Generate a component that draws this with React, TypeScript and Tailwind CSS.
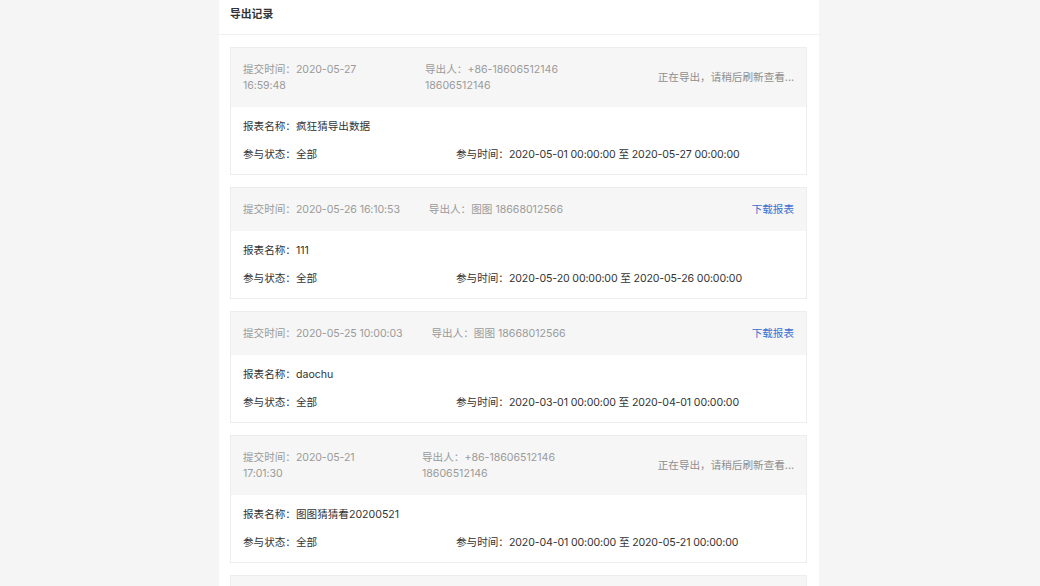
import React from "react";

type Rec = {
  time: string;
  exporter: string;
  col1: string;
  col2: string;
  status: "pending" | "done";
  name: string;
  range: string;
};

const records: Rec[] = [
  {
    time: "2020-05-27 16:59:48",
    exporter: "+86-18606512146 18606512146",
    col1: "w-[125px]",
    col2: "ml-[57px] w-[150px]",
    status: "pending",
    name: "疯狂猜导出数据",
    range: "2020-05-01 00:00:00 至 2020-05-27 00:00:00",
  },
  {
    time: "2020-05-26 16:10:53",
    exporter: "图图 18668012566",
    col1: "",
    col2: "ml-[29px]",
    status: "done",
    name: "111",
    range: "2020-05-20 00:00:00 至 2020-05-26 00:00:00",
  },
  {
    time: "2020-05-25 10:00:03",
    exporter: "图图 18668012566",
    col1: "",
    col2: "ml-[29px]",
    status: "done",
    name: "daochu",
    range: "2020-03-01 00:00:00 至 2020-04-01 00:00:00",
  },
  {
    time: "2020-05-21 17:01:30",
    exporter: "+86-18606512146 18606512146",
    col1: "w-[125px]",
    col2: "ml-[54px] w-[150px]",
    status: "pending",
    name: "图图猜猜看20200521",
    range: "2020-04-01 00:00:00 至 2020-05-21 00:00:00",
  },
];

function Card({ r }: { r: Rec }) {
  return (
    <div className="border border-[#ededed] bg-white">
      <div className="flex items-center bg-[#f6f6f6] pl-[12px] pr-[12px] pt-[14px] pb-[13px] text-[#9a9a9a] leading-[16px]">
        <div className={`${r.col1} shrink-0`}>
          提交时间：<span className="tracking-[-0.1px]">{r.time}</span>
        </div>
        <div className={`${r.col2} shrink-0`}>导出人：{r.exporter}</div>
        <div className="ml-auto">
          {r.status === "pending" ? (
            <span className="text-[#8f8f8f]">正在导出，请稍后刷新查看...</span>
          ) : (
            <span className="text-[#3b6fd0]">下载报表</span>
          )}
        </div>
      </div>
      <div className="pl-[12px] pr-[12px] pt-[12px] pb-[11px] text-[#333333] leading-[16px] flex flex-col gap-[12px]">
        <div>报表名称：{r.name}</div>
        <div className="flex">
          <div className="w-[213px]">参与状态：全部</div>
          <div>
            参与时间：<span className="tracking-[-0.14px]">{r.range}</span>
          </div>
        </div>
      </div>
    </div>
  );
}

export default function App() {
  return (
    <div
      className="w-[1040px] h-[586px] overflow-hidden bg-[#f5f5f5] flex justify-center"
      style={{ fontFamily: 'Inter, "Noto Sans CJK SC", "Noto Sans", sans-serif' }}
    >
      <div className="w-[600px] ml-[-2px] bg-white text-[10.6px]">
        <div className="h-[35px] border-b border-[#f0f0f0] pl-[11px] pt-[7px] leading-[16px] text-[10.8px] font-bold text-[#333333]">
          导出记录
        </div>
        <div className="pl-[11px] pr-[12px] pt-[12px] flex flex-col gap-[12px]">
          {records.map((r, i) => (
            <Card key={i} r={r} />
          ))}
          <div className="border border-[#ededed] bg-[#f6f6f6] h-[60px]" />
        </div>
      </div>
    </div>
  );
}
